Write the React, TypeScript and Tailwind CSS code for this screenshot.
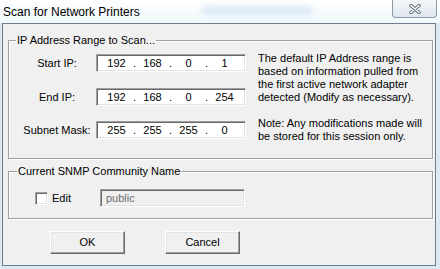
import React from "react";

const sunken =
  "border border-t-[#a0a0a0] border-l-[#a0a0a0] border-r-white border-b-white shadow-[inset_1px_1px_0_#696969,inset_-1px_-1px_0_#e3e3e3]";
const raised =
  "border border-t-white border-l-white border-r-[#696969] border-b-[#696969] shadow-[inset_-1px_-1px_0_#a0a0a0,inset_1px_1px_0_#e3e3e3]";
const etched =
  "border border-[#a0a0a0] shadow-[inset_1px_1px_0_#fff,1px_1px_0_#fff]";

function IpBox({ octets }: { octets: string[] }) {
  return (
    <div className={`w-[150px] h-[18px] bg-white ${sunken} flex items-center pl-[8px]`}>
      {octets.map((o, i) => (
        <React.Fragment key={i}>
          <span className="w-[23px] text-center">{o}</span>
          {i < 3 && <span className="w-[13px] text-center">.</span>}
        </React.Fragment>
      ))}
    </div>
  );
}

function Row({ label, octets }: { label: string; octets: string[] }) {
  return (
    <div className="flex items-center h-[18px]">
      <span className="w-[78px] text-center">{label}</span>
      <IpBox octets={octets} />
    </div>
  );
}

export default function App() {
  return (
    <div className="w-[440px] h-[269px] bg-[#dde9f4] flex flex-col overflow-hidden font-['Liberation_Sans',sans-serif] text-[11px] leading-[13px] text-black">
      <div className="h-[23px] flex items-start bg-gradient-to-b from-white to-[#eef8fb]">
        <span className="ml-[3px] mt-[5px] text-[12px] leading-[14px]">Scan for Network Printers</span>
        <div className="ml-[62px] mt-[7px] w-[110px] h-[7px] bg-[#8aaee6] opacity-30 blur-[3px]" />
        <div className="ml-auto mr-[3px] w-[45px] h-[18px] rounded-b-[4px] border border-t-0 border-[#8c99a6] bg-gradient-to-b from-[#f4f7fa] to-[#dfe7ee] flex items-center justify-center">
          <svg width="12" height="10" viewBox="0 0 12 10">
            <path d="M2 1.5 L10 8.5 M10 1.5 L2 8.5" stroke="#5f6b78" strokeWidth="3.4" strokeLinecap="round" />
            <path d="M2 1.5 L10 8.5 M10 1.5 L2 8.5" stroke="#ffffff" strokeWidth="1.6" strokeLinecap="round" />
          </svg>
        </div>
      </div>
      <div className="ml-[2px] mr-[4px] h-[243px] border border-[#717d8a] bg-[#f0f0f0] flex flex-col">
        <div className={`relative ml-[5px] mt-[16px] w-[425px] h-[119px] ${etched} flex`}>
          <span className="absolute left-[7px] top-[-7px] px-[1px] bg-[#f0f0f0]">IP Address Range to Scan...</span>
          <div className="pl-[9px] pt-[13px] flex flex-col">
            <Row label="Start IP:" octets={["192", "168", "0", "1"]} />
            <div className="mt-[16px]">
              <Row label="End IP:" octets={["192", "168", "0", "254"]} />
            </div>
            <div className="mt-[15px]">
              <Row label="Subnet Mask:" octets={["255", "255", "255", "0"]} />
            </div>
          </div>
          <div className="ml-[12px] pt-[11px] whitespace-nowrap">
            <p>
              The default IP Address range is
              <br />
              based on information pulled from
              <br />
              the first active network adapter
              <br />
              detected (Modify as necessary).
            </p>
            <p className="mt-[13px]">
              Note: Any modifications made will
              <br />
              be stored for this session only.
            </p>
          </div>
        </div>
        <div className={`relative ml-[5px] mt-[12px] w-[425px] h-[48px] ${etched} flex items-start`}>
          <span className="absolute left-[8px] top-[-7px] px-[1px] bg-[#f0f0f0]">Current SNMP Community Name</span>
          <div className="mt-[17px] ml-[26px] flex items-center h-[18px]">
            <span className={`w-[13px] h-[13px] bg-white ${sunken}`} />
            <span className="ml-[4px] w-[48px]">Edit</span>
            <div className={`w-[145px] h-[18px] ${sunken} bg-[#f0f0f0] flex items-center pl-[5px] text-[#6d6d6d]`}>
              public
            </div>
          </div>
        </div>
        <div className="mt-[12px] ml-[47px] flex gap-[40px]">
          <button className={`w-[75px] h-[23px] bg-[#f0f0f0] ${raised} flex items-center justify-center`}>OK</button>
          <button className={`w-[75px] h-[23px] bg-[#f0f0f0] ${raised} flex items-center justify-center`}>Cancel</button>
        </div>
      </div>
    </div>
  );
}
